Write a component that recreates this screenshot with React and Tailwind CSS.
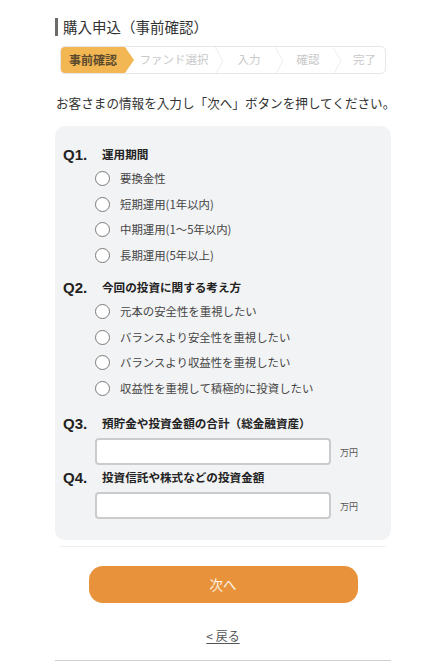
import React from 'react'

const jp = { fontFamily: '"Noto Sans CJK JP", "Noto Sans", sans-serif' }

const steps = [
  { label: 'ファンド選択', w: 'w-[80px]' },
  { label: '入力', w: 'w-[50px]' },
  { label: '確認', w: 'w-[48px]' },
  { label: '完了', w: 'w-[45px]' },
]

function Chevron() {
  return (
    <svg width="10" height="28" viewBox="0 0 10 28" className="shrink-0">
      <path d="M1 0 L9 14 L1 28" fill="none" stroke="#ececec" strokeWidth="1" />
    </svg>
  )
}

function StepBar() {
  return (
    <div className="mt-[9px] h-[28px] flex items-stretch border border-[#e6e6e6] rounded-[5px] overflow-hidden ml-[5px] w-[326px]">
      <div className="w-[73px] shrink-0 bg-[#f2b652] flex items-center pl-[8px] text-[12px] font-bold text-[#5b4a2e] [clip-path:polygon(0_0,calc(100%-9px)_0,100%_50%,calc(100%-9px)_100%,0_100%)]">
        事前確認
      </div>
      {steps.map((s, i) => (
        <React.Fragment key={s.label}>
          {i > 0 && <Chevron />}
          <div className={`${s.w} shrink-0 flex items-center justify-center text-[11.5px] text-[#c9c9c9]`}>
            {s.label}
          </div>
        </React.Fragment>
      ))}
    </div>
  )
}

function Radio({ label }) {
  return (
    <label className="h-[25.5px] flex items-center pl-[32px]">
      <span className="w-[15px] h-[15px] rounded-full border-[1.5px] border-[#7a7a7a] bg-white shrink-0" />
      <span className="ml-[10px] text-[11.4px] text-[#444]">{label}</span>
    </label>
  )
}

function QHead({ no, label, className = '' }) {
  return (
    <div className={`h-[22px] flex items-center ${className}`}>
      <span
        className="w-[39px] text-[15px] font-bold text-[#222]"
        style={{ fontFamily: '"Liberation Sans", Arial, sans-serif' }}
      >
        {no}
      </span>
      <span className="text-[11.6px] font-bold text-[#222]">{label}</span>
    </div>
  )
}

function AmountInput() {
  return (
    <div className="mt-[3px] flex items-center pl-[32px]">
      <div className="w-[236px] h-[27px] bg-white border-2 border-[#cbcbcb] rounded-[4px]" />
      <span className="ml-[9px] text-[9px] text-[#555] mt-[2px]">万円</span>
    </div>
  )
}

export default function App() {
  return (
    <div className="min-h-screen bg-white px-[55px] pt-[17px]" style={jp}>
      {/* heading */}
      <div className="h-[20px] flex items-center">
        <span className="w-[3px] h-[18px] bg-[#6b6b6b]" />
        <h1 className="ml-[5px] text-[14.5px] text-[#333]">購入申込（事前確認）</h1>
      </div>

      <StepBar />

      <p className="mt-[20px] h-[18px] leading-[18px] text-[12.6px] text-[#333] ml-[1px] whitespace-nowrap">
        お客さまの情報を入力し「次へ」ボタンを押してください。
      </p>

      {/* questions panel */}
      <div className="mt-[14px] bg-[#f2f3f4] rounded-[10px] pt-[18px] pb-[21px] pl-[8px]">
        <QHead no="Q1." label="運用期間" />
        <Radio label="要換金性" />
        <Radio label="短期運用(1年以内)" />
        <Radio label="中期運用(1〜5年以内)" />
        <Radio label="長期運用(5年以上)" />

        <QHead no="Q2." label="今回の投資に関する考え方" className="mt-[9px]" />
        <Radio label="元本の安全性を重視したい" />
        <Radio label="バランスより安全性を重視したい" />
        <Radio label="バランスより収益性を重視したい" />
        <Radio label="収益性を重視して積極的に投資したい" />

        <QHead no="Q3." label="預貯金や投資金額の合計（総金融資産）" className="mt-[12px]" />
        <AmountInput />
        <QHead no="Q4." label="投資信託や株式などの投資金額" className="mt-[2px]" />
        <AmountInput />
      </div>

      <div className="mt-[6px] mx-[5px] h-px bg-[#efefef]" />

      <div className="mt-[19px] flex justify-center">
        <button className="w-[269px] h-[37px] rounded-[14px] bg-[#e8933b] text-white/90 text-[13.5px]">
          次へ
        </button>
      </div>

      <div className="mt-[25px] h-[16px] flex justify-center">
        <a href="#" className="text-[12px] leading-[16px] text-[#555] underline underline-offset-2">
          &lt; 戻る
        </a>
      </div>

      <div className="mt-[16px] h-px bg-[#cfcfcf]" />
    </div>
  )
}
